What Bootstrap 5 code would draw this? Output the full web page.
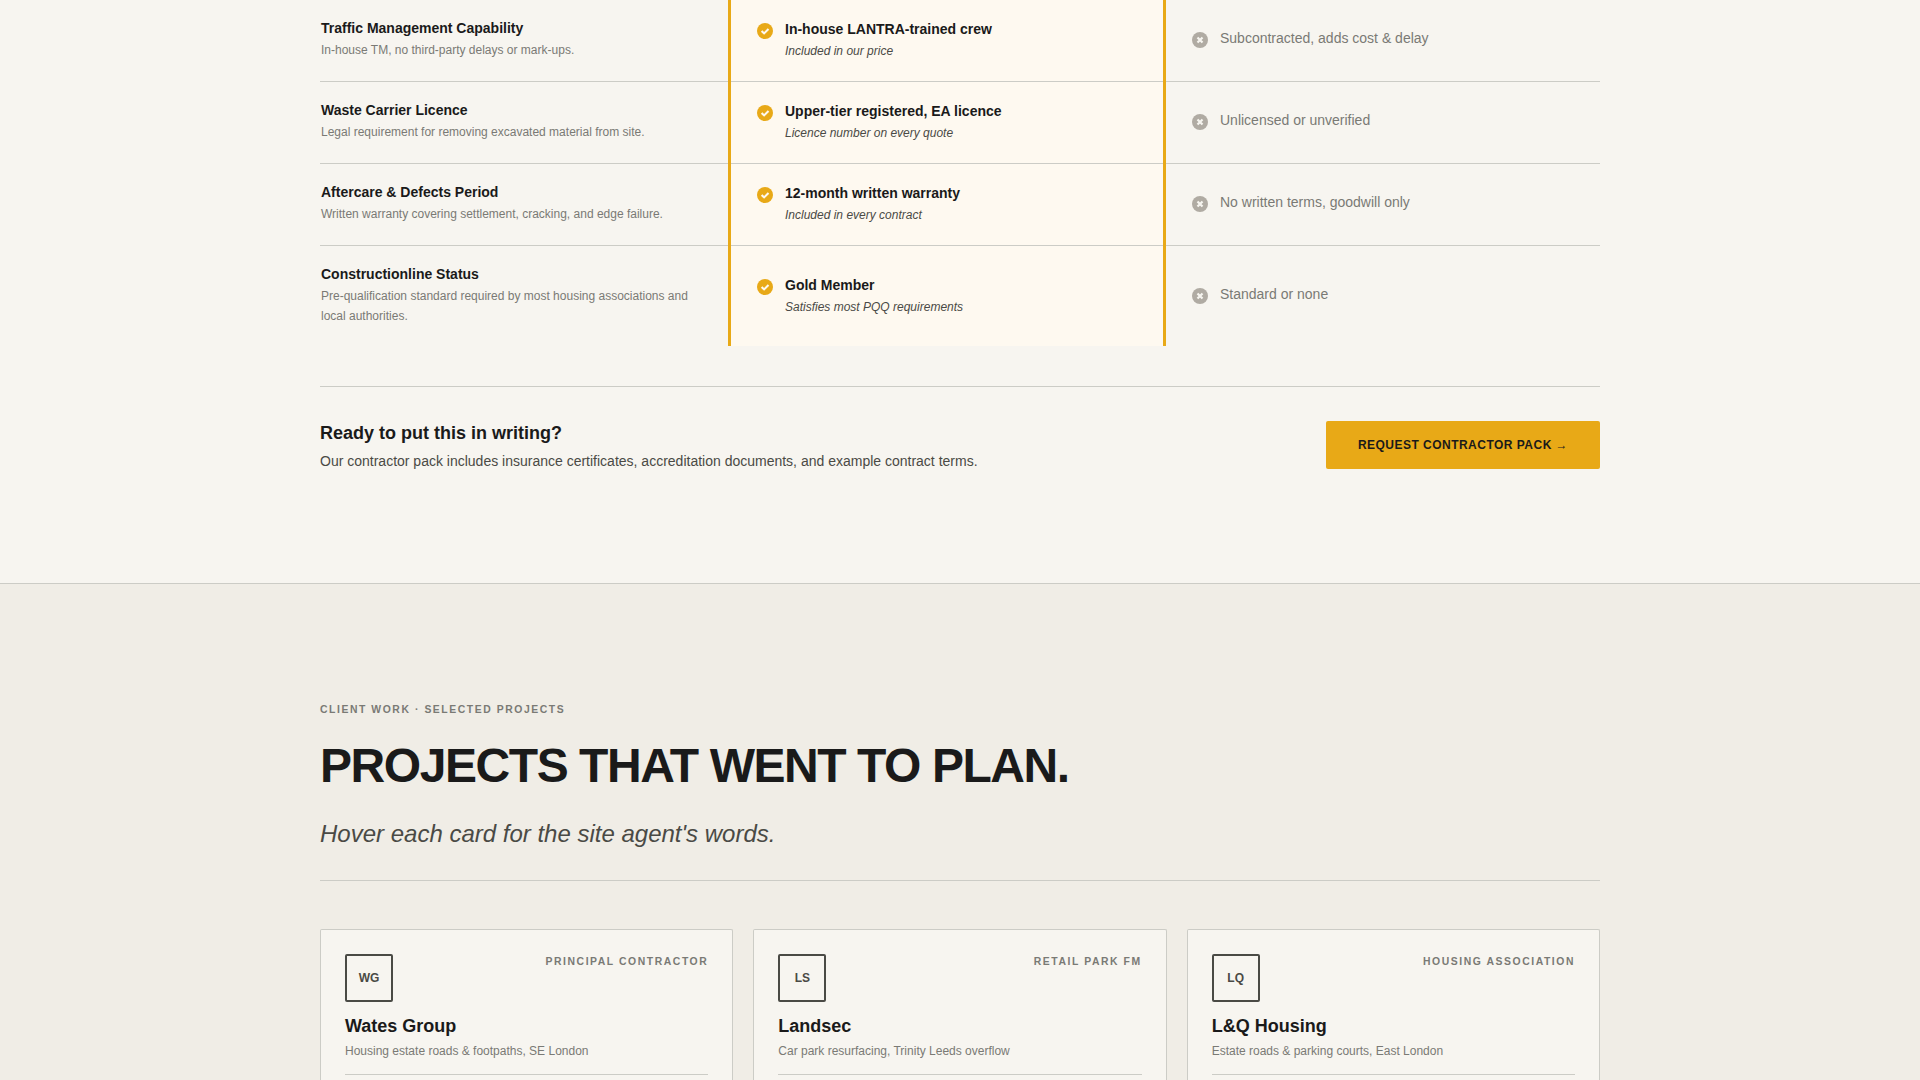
<!DOCTYPE html>
<html lang="en">
<head>
<meta charset="utf-8">
<meta name="viewport" content="width=device-width, initial-scale=1">
<title>Contractor comparison and client work</title>
<link rel="stylesheet" href="https://cdn.jsdelivr.net/npm/bootstrap@5.3.0/dist/css/bootstrap.min.css">
<style>
:root{--ink:#1a1a1a;--mid:#4a4a45;--soft:#7a7a75;--rule:#ccccc6;--paper:#f7f5f0;--stone:#f0ede6;--amber:#e8a917;--cream:#fef9f0}
html,body{height:1080px;overflow:hidden}
body{font-family:"Liberation Sans",Arial,sans-serif;color:var(--ink);background:var(--stone);line-height:1.65;font-size:14px}
.wrap{width:1280px;margin:0 auto}
.terms{background:var(--paper);height:584px;border-bottom:1px solid var(--rule)}
.compare{width:100%;table-layout:fixed;border-collapse:separate;border-spacing:0}
.compare td{vertical-align:top;padding:0;height:82px;box-shadow:inset 0 -1px var(--rule)}
.compare tr:last-child td{height:100px;box-shadow:none}
.compare td.topic{padding:17px 24px 0 1px}
.compare td.ours{background:var(--cream);border-left:3px solid var(--amber);border-right:3px solid var(--amber);padding:18px 20px 0 26px}
.compare td.theirs{padding:27px 20px 0 26px;color:var(--soft)}
.compare tr:last-child td.ours{padding-top:28px}
.compare tr:last-child td.theirs{padding-top:37px}
.t-head{font-weight:700;line-height:22px}
.t-note{font-size:12px;line-height:20px;color:var(--soft);margin-top:1px}
.ours .t-note{color:var(--mid);font-style:italic}
.tick{width:16px;height:16px;flex:none;margin-top:5px}
.cta{border-top:1px solid var(--rule);margin-top:40px;padding-top:34px}
.cta-title{font-size:18px;font-weight:700;line-height:24px}
.cta-text{color:var(--mid);line-height:23px;margin-top:5px}
.btn-amber{background:var(--amber);color:var(--ink);font-size:12px;font-weight:700;letter-spacing:.48px;line-height:20px;width:274px;padding:14px 0;border:0;border-radius:2px}
.eyebrow{font-size:10.4px;font-weight:700;letter-spacing:1.56px;line-height:18px;color:var(--soft)}
.headline{font-size:48px;font-weight:700;letter-spacing:-1.44px;line-height:52px;margin:21px 0 0}
.sub{font-size:24px;font-style:italic;color:var(--mid);line-height:40px;margin-top:22px}
.work{padding-top:117px}
.work-head{border-bottom:1px solid var(--rule);height:180px}
.work-grid{display:grid;grid-template-columns:repeat(3,1fr);gap:20px;margin-top:48px}
.client{background:var(--paper);border:1px solid var(--rule);border-radius:2px;padding:24px;height:151px;border-bottom:0;border-bottom-left-radius:0;border-bottom-right-radius:0}
.monogram{width:48px;height:48px;border:2px solid var(--mid);border-radius:2px;font-size:12px;font-weight:700;color:var(--mid);padding-top:1px}
.sector{font-size:10.4px;font-weight:700;letter-spacing:1.56px;line-height:18px;color:var(--soft);margin-top:-1px}
.client-name{font-size:18px;font-weight:700;line-height:24px;margin-top:12px}
.client-job{font-size:12px;line-height:20px;color:var(--soft);margin-top:3px;padding-bottom:13px;border-bottom:1px solid var(--rule)}
</style>
<script src="https://cdn.jsdelivr.net/npm/bootstrap@5.3.0/dist/js/bootstrap.bundle.min.js"></script>
</head>
<body>
<svg class="d-none" xmlns="http://www.w3.org/2000/svg">
  <symbol id="yes" viewBox="0 0 16 16"><circle cx="8" cy="8" r="8" fill="#e8a917"/><path d="M4.6 8 7.1 10.4 11.5 6" fill="none" stroke="#fef9f0" stroke-width="2.1"/></symbol>
  <symbol id="no" viewBox="0 0 16 16"><circle cx="8" cy="8" r="8" fill="#b0aba3"/><path d="M5.5 5.5 10.5 10.5M10.5 5.5 5.5 10.5" fill="none" stroke="#f7f5f0" stroke-width="2.2"/></symbol>
</svg>
<section class="terms">
  <div class="wrap">
    <table class="compare">
      <colgroup><col style="width:408px"><col style="width:438px"><col></colgroup>
      <tbody>
        <tr>
          <td class="topic"><div class="t-head">Traffic Management Capability</div><div class="t-note">In-house TM, no third-party delays or mark-ups.</div></td>
          <td class="ours"><div class="d-flex"><svg class="tick me-2"><use href="#yes"/></svg><div class="ms-1"><div class="t-head">In-house LANTRA-trained crew</div><div class="t-note">Included in our price</div></div></div></td>
          <td class="theirs"><div class="d-flex"><svg class="tick me-2"><use href="#no"/></svg><div class="ms-1">Subcontracted, adds cost &amp; delay</div></div></td>
        </tr>
        <tr>
          <td class="topic"><div class="t-head">Waste Carrier Licence</div><div class="t-note">Legal requirement for removing excavated material from site.</div></td>
          <td class="ours"><div class="d-flex"><svg class="tick me-2"><use href="#yes"/></svg><div class="ms-1"><div class="t-head">Upper-tier registered, EA licence</div><div class="t-note">Licence number on every quote</div></div></div></td>
          <td class="theirs"><div class="d-flex"><svg class="tick me-2"><use href="#no"/></svg><div class="ms-1">Unlicensed or unverified</div></div></td>
        </tr>
        <tr>
          <td class="topic"><div class="t-head">Aftercare &amp; Defects Period</div><div class="t-note">Written warranty covering settlement, cracking, and edge failure.</div></td>
          <td class="ours"><div class="d-flex"><svg class="tick me-2"><use href="#yes"/></svg><div class="ms-1"><div class="t-head">12-month written warranty</div><div class="t-note">Included in every contract</div></div></div></td>
          <td class="theirs"><div class="d-flex"><svg class="tick me-2"><use href="#no"/></svg><div class="ms-1">No written terms, goodwill only</div></div></td>
        </tr>
        <tr>
          <td class="topic"><div class="t-head">Constructionline Status</div><div class="t-note">Pre-qualification standard required by most housing associations and local authorities.</div></td>
          <td class="ours"><div class="d-flex"><svg class="tick me-2"><use href="#yes"/></svg><div class="ms-1"><div class="t-head">Gold Member</div><div class="t-note">Satisfies most PQQ requirements</div></div></div></td>
          <td class="theirs"><div class="d-flex"><svg class="tick me-2"><use href="#no"/></svg><div class="ms-1">Standard or none</div></div></td>
        </tr>
      </tbody>
    </table>
    <div class="cta d-flex justify-content-between align-items-start">
      <div>
        <div class="cta-title">Ready to put this in writing?</div>
        <div class="cta-text">Our contractor pack includes insurance certificates, accreditation documents, and example contract terms.</div>
      </div>
      <a class="btn btn-amber" href="#">REQUEST CONTRACTOR PACK →</a>
    </div>
  </div>
</section>
<section class="work">
  <div class="wrap">
    <header class="work-head">
      <div class="eyebrow">CLIENT WORK · SELECTED PROJECTS</div>
      <h2 class="headline">PROJECTS THAT WENT TO PLAN.</h2>
      <div class="sub">Hover each card for the site agent's words.</div>
    </header>
    <div class="work-grid">
      <article class="client">
        <div class="d-flex justify-content-between align-items-start"><div class="monogram d-flex align-items-center justify-content-center">WG</div><div class="sector">PRINCIPAL CONTRACTOR</div></div>
        <div class="client-name">Wates Group</div>
        <div class="client-job">Housing estate roads &amp; footpaths, SE London</div>
      </article>
      <article class="client">
        <div class="d-flex justify-content-between align-items-start"><div class="monogram d-flex align-items-center justify-content-center">LS</div><div class="sector">RETAIL PARK FM</div></div>
        <div class="client-name">Landsec</div>
        <div class="client-job">Car park resurfacing, Trinity Leeds overflow</div>
      </article>
      <article class="client">
        <div class="d-flex justify-content-between align-items-start"><div class="monogram d-flex align-items-center justify-content-center">LQ</div><div class="sector">HOUSING ASSOCIATION</div></div>
        <div class="client-name">L&amp;Q Housing</div>
        <div class="client-job">Estate roads &amp; parking courts, East London</div>
      </article>
    </div>
  </div>
</section>
</body>
</html>
